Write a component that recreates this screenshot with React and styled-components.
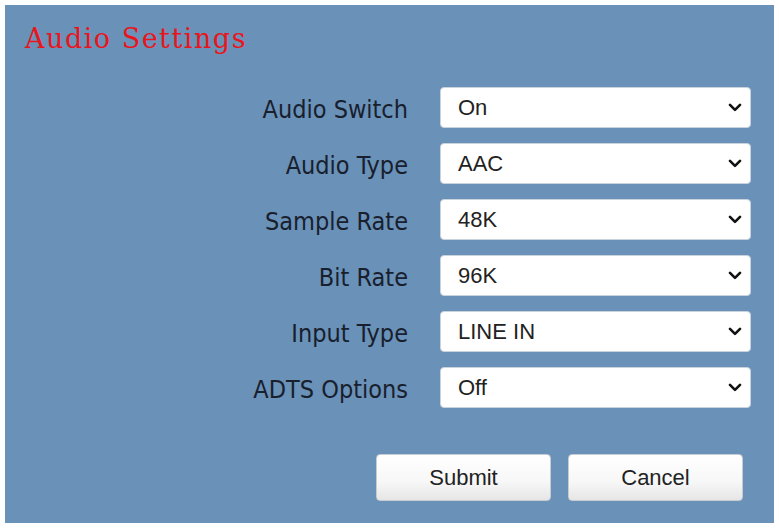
import styled, { createGlobalStyle } from 'styled-components'

const GlobalStyle = createGlobalStyle`
  html, body {
    margin: 0;
    padding: 0;
    background: #ffffff;
  }
`

const fields = [
  { label: 'Audio Switch', value: 'On', options: ['On', 'Off'] },
  { label: 'Audio Type', value: 'AAC', options: ['AAC', 'G.711A', 'G.711U'] },
  { label: 'Sample Rate', value: '48K', options: ['48K', '44.1K', '16K', '8K'] },
  { label: 'Bit Rate', value: '96K', options: ['96K', '128K', '64K'] },
  { label: 'Input Type', value: 'LINE IN', options: ['LINE IN', 'MIC IN'] },
  { label: 'ADTS Options', value: 'Off', options: ['Off', 'On'] },
]

function Chevron() {
  return (
    <ChevronIcon viewBox="0 0 14 9" width="14" height="9">
      <polyline
        points="2,1.8 7,6.8 12,1.8"
        fill="none"
        stroke="#111"
        strokeWidth="2.6"
        strokeLinecap="round"
        strokeLinejoin="round"
      />
    </ChevronIcon>
  )
}

export default function App() {
  return (
    <>
      <GlobalStyle />
      <Panel>
        <Title>Audio Settings</Title>
        <Form>
          {fields.map((f) => (
            <Row key={f.label}>
              <Label>{f.label}</Label>
              <SelectWrap>
                <Select defaultValue={f.value}>
                  {f.options.map((o) => (
                    <option key={o}>{o}</option>
                  ))}
                </Select>
                <Chevron />
              </SelectWrap>
            </Row>
          ))}
        </Form>
        <Actions>
          <Button>Submit</Button>
          <Button>Cancel</Button>
        </Actions>
      </Panel>
    </>
  )
}

const Panel = styled.div`
  box-sizing: border-box;
  margin: 5px;
  width: 769px;
  height: 518px;
  background-color: #6a91b8;
  display: flex;
  flex-direction: column;
`

const Title = styled.h1`
  margin: 0;
  padding: 19px 0 0 20px;
  height: 60px;
  box-sizing: border-box;
  font-family: 'DejaVu Serif', 'Liberation Serif', serif;
  font-size: 27px;
  font-weight: 400;
  letter-spacing: 1.5px;
  line-height: 30px;
  color: #e8161c;
`

const Form = styled.div`
  display: flex;
  flex-direction: column;
  gap: 15px;
  padding: 22px 23px 0 0;
`

const Row = styled.div`
  display: grid;
  grid-template-columns: 1fr 311px;
  column-gap: 32px;
  align-items: center;
`

const Label = styled.span`
  text-align: right;
  font-family: 'DejaVu Sans Condensed', 'DejaVu Sans', sans-serif;
  font-size: 25px;
  color: #18202d;
  line-height: 1;
  padding-top: 4px;
`

const SelectWrap = styled.div`
  position: relative;
  height: 41px;
`

const Select = styled.select`
  appearance: none;
  box-sizing: border-box;
  width: 100%;
  height: 100%;
  margin: 0;
  padding: 0 40px 0 17px;
  border: 1px solid #c9d3dd;
  border-radius: 4px;
  background: #ffffff;
  font-family: 'Liberation Sans', Arial, sans-serif;
  font-size: 22px;
  color: #222;
  outline: none;
`

const ChevronIcon = styled.svg`
  position: absolute;
  right: 9px;
  top: 16px;
  pointer-events: none;
`

const Actions = styled.div`
  display: flex;
  justify-content: flex-end;
  gap: 17px;
  padding: 46px 31px 0 0;
`

const Button = styled.button`
  box-sizing: border-box;
  width: 175px;
  height: 47px;
  border: 1px solid #c7ccd2;
  border-radius: 4px;
  background: linear-gradient(#ffffff 0%, #f7f7f7 60%, #e6e6e6 100%);
  font-family: 'Liberation Sans', Arial, sans-serif;
  font-size: 22px;
  color: #222;
  cursor: pointer;
`
